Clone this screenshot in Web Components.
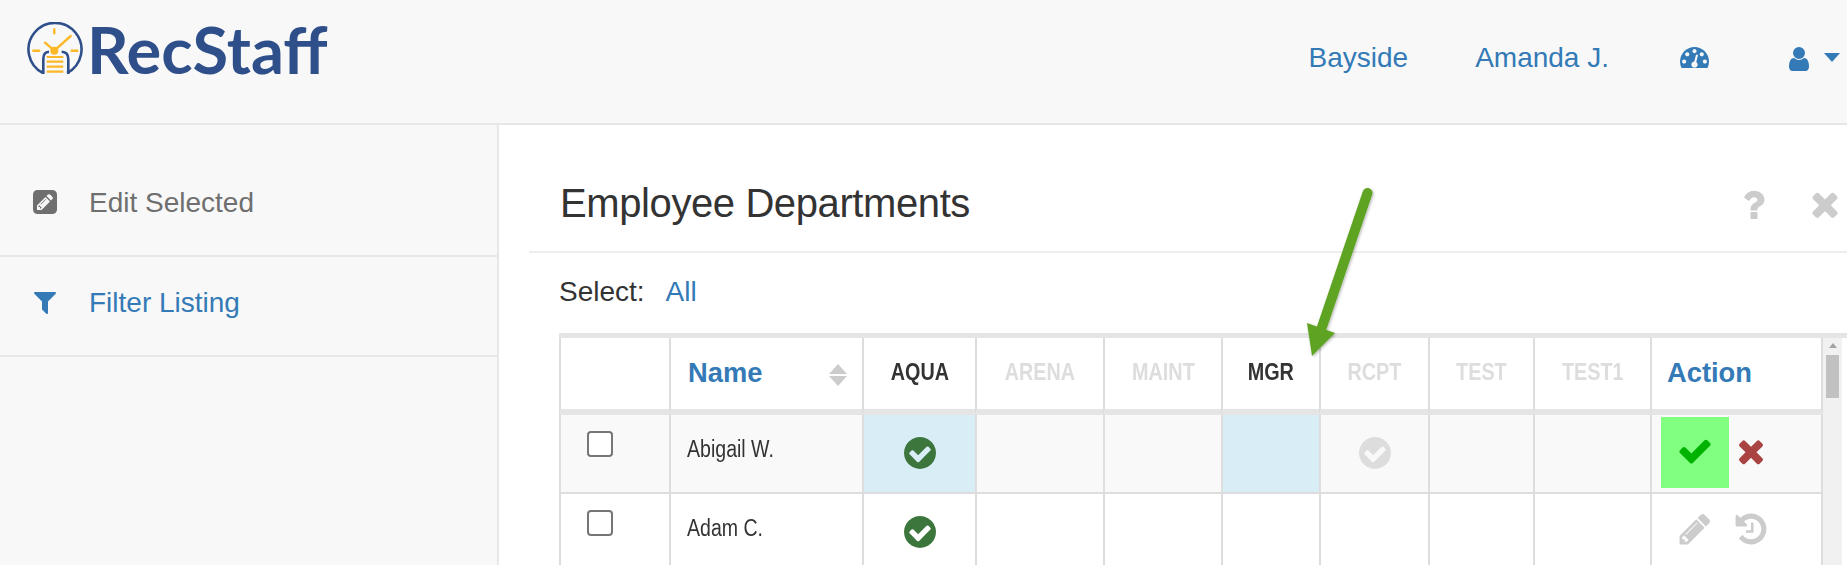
<!DOCTYPE html>
<html>
<head>
<meta charset="utf-8">
<title>RecStaff</title>
<style>
  html, body { margin: 0; height: 100%; overflow: hidden; background: #f8f8f8; }
  body { font-family: "Liberation Sans", Arial, sans-serif; color: #333; }
</style>
</head>
<body>
<rc-app></rc-app>
<script>
// font-awesome 4 style glyphs, traced into plain paths
const ICONS = {
  check: ['0 0 1792 1792', 'M1671 566q0 40-28 68l-724 724-136 136q-28 28-68 28t-68-28l-136-136-362-362q-28-28-28-68t28-68l136-136q28-28 68-28t68 28l294 295 656-657q28-28 68-28t68 28l136 136q28 28 28 68z'],
  times: ['0 0 1792 1792', 'M1490 1322q0 40-28 68l-136 136q-28 28-68 28t-68-28l-294-294-294 294q-28 28-68 28t-68-28l-136-136q-28-28-28-68t28-68l294-294-294-294q-28-28-28-68t28-68l136-136q28-28 68-28t68 28l294 294 294-294q28-28 68-28t68 28l136 136q28 28 28 68t-28 68l-294 294 294 294q28 28 28 68z'],
  circle: ['128 128 1536 1536', 'M1412 734q0-28-18-46l-91-90q-19-19-45-19t-45 19l-408 407-226-226q-19-19-45-19t-45 19l-91 90q-18 18-18 46 0 27 18 45l362 362q19 19 45 19 27 0 46-19l543-543q18-18 18-45zm252 162q0 209-103 385.5t-279.5 279.5-385.5 103-385.5-103-279.5-279.5-103-385.5 103-385.5 279.5-279.5 385.5-103 385.5 103 279.5 279.5 103 385.5z'],
  pencil: ['0 0 1792 1792', 'M491 1536l91-91-235-235-91 91v107h128v128h107zm523-928q0-22-22-22-10 0-17 7l-542 542q-7 7-7 17 0 22 22 22 10 0 17-7l542-542q7-7 7-17zm-54-192l416 416-832 832h-416v-416zm683 96q0 53-37 90l-166 166-416-416 166-165q36-38 90-38 53 0 91 38l235 234q37 39 37 91z'],
  filter: ['0 0 1792 1792', 'M1595 295q17 41-14 70l-493 493v742q0 42-39 59-13 5-25 5-27 0-45-19l-256-256q-19-19-19-45v-486l-493-493q-31-29-14-70 17-39 59-39h1280q42 0 59 39z'],
  user: ['0 0 1792 1792', 'M1536 1399q0 109-62.5 187t-150.5 78h-854q-88 0-150.5-78t-62.5-187q0-85 8.5-160.5t31.5-152 58.5-131 94-89 134.5-34.5q131 128 313 128t313-128q76 0 134.5 34.5t94 89 58.5 131 31.5 152 8.5 160.5zm-256-887q0 159-112.5 271.5t-271.5 112.5-271.5-112.5-112.5-271.5 112.5-271.5 271.5-112.5 271.5 112.5 112.5 271.5z'],
  history: ['0 0 1792 1792', 'M1664 896q0 156-61 298t-164 245-245 164-298 61q-172 0-327-72.5t-264-204.5q-7-10-6.5-22.5t8.5-20.5l137-138q10-9 25-9 16 2 23 12 73 95 179 147t225 52q104 0 198.5-40.5t163.5-109.5 109.5-163.5 40.5-198.5-40.5-198.5-109.5-163.5-163.5-109.5-198.5-40.5q-98 0-188 35.5t-160 101.5l137 138q31 30 14 69-17 40-59 40h-448q-26 0-45-19t-19-45v-448q0-42 40-59 39-17 69 14l130 129q107-101 244.5-156.5t284.5-55.5q156 0 298 61t245 164 164 245 61 298zm-640-288v448q0 14-9 23t-23 9h-320q-14 0-23-9t-9-23v-64q0-14 9-23t23-9h224v-352q0-14 9-23t23-9h64q14 0 23 9t9 23z'],
  question: ['0 128 1088 1536', 'M704 1256v240q0 16-12 28t-28 12h-240q-16 0-28-12t-12-28v-240q0-16 12-28t28-12h240q16 0 28 12t12 28zm316-600q0 54-15.5 101t-35 76.5-55 59.5-57.5 43.5-61 35.5q-41 23-68.5 65t-27.5 67q0 17-12 32.5t-28 15.5h-240q-15 0-25.5-18.5t-10.5-37.5v-45q0-83 65-156.5t143-108.5q59-27 84-56t25-76q0-42-46.5-74t-107.5-32q-65 0-108 29-35 25-107 115-13 16-31 16-12 0-25-8l-164-125q-13-10-15.5-25t5.5-28q160-266 464-266 80 0 161 31t146 83 106 127.5 41 158.5z'],
  editbox: ['128 128 1536 1536', 'M532 1108l152 152-52 52h-56v-96h-96v-56zm414-390q14 13-3 30l-291 291q-17 17-30 3-14-13 3-30l291-291q17-17 30-3zm-274 690l544-544-288-288-544 544v288h288zm608-608l92-92q28-28 28-68t-28-68l-152-152q-28-28-68-28t-68 28l-92 92zm384-384v960q0 119-84.5 203.5t-203.5 84.5h-960q-119 0-203.5-84.5t-84.5-203.5v-960q0-119 84.5-203.5t203.5-84.5h960q119 0 203.5 84.5t84.5 203.5z'],
  dashboard: ['0 256 1792 1280', 'M384 1152q0-53-37.5-90.5t-90.5-37.5-90.5 37.5-37.5 90.5 37.5 90.5 90.5 37.5 90.5-37.5 37.5-90.5zm192-448q0-53-37.5-90.5t-90.5-37.5-90.5 37.5-37.5 90.5 37.5 90.5 90.5 37.5 90.5-37.5 37.5-90.5zm428 481l101-382q6-26-7.5-48.5t-38.5-29.5-48 6.5-30 39.5l-101 382q-60 5-107 43.5t-63 98.5q-20 77 20 146t117 89 146-20 89-117q16-60-6-117t-72-91zm660-33q0-53-37.5-90.5t-90.5-37.5-90.5 37.5-37.5 90.5 37.5 90.5 90.5 37.5 90.5-37.5 37.5-90.5zm-640-640q0-53-37.5-90.5t-90.5-37.5-90.5 37.5-37.5 90.5 37.5 90.5 90.5 37.5 90.5-37.5 37.5-90.5zm448 192q0-53-37.5-90.5t-90.5-37.5-90.5 37.5-37.5 90.5 37.5 90.5 90.5 37.5 90.5-37.5 37.5-90.5zm320 448q0 261-141 483-19 29-54 29h-1402q-35 0-54-29-141-221-141-483 0-182 71-348t191-286 286-191 348-71 348 71 286 191 191 286 71 348z']
};

class RcIcon extends HTMLElement {
  connectedCallback() {
    const name = this.getAttribute('name');
    const size = this.getAttribute('size') || 24;
    const [box, d] = ICONS[name];
    const [, , w, h] = box.split(' ').map(Number);
    this.attachShadow({ mode: 'open' });
    this.shadowRoot.innerHTML = `
      <style>
        :host { display: inline-flex; line-height: 0; }
        svg { display: block; fill: currentColor; }
      </style>
      <svg width="${size}" height="${size * h / w}" viewBox="${box}"><path d="${d}"/></svg>
    `;
  }
}
customElements.define('rc-icon', RcIcon);

class RcHeader extends HTMLElement {
  constructor() {
    super();
    this.attachShadow({ mode: 'open' });
    this.shadowRoot.innerHTML = `
      <style>
        :host {
          display: flex;
          justify-content: space-between;
          height: 123px;
          border-bottom: 2px solid #e7e7e7;
          background: #f8f8f8;
        }
        .logo {
          display: flex;
          align-items: flex-start;
          padding: 22px 0 0 26px;
          color: #2f4f8a;
          font: 700 65px/54px Lato, sans-serif;
        }
        .logo svg { display: block; margin: 0 1px 0 0; flex: none; }
        nav {
          display: flex;
          align-items: flex-start;
          padding-top: 42px;
          color: #337ab7;
          font-size: 28px;
          line-height: 32px;
        }
        .who { margin-left: 67px; }
        .gauge { margin: 5px 0 0 71px; }
        .me { margin: 3px 0 0 76px; display: flex; }
        .caret {
          width: 0;
          height: 0;
          margin: 8px 7px 0 11px;
          border: 8px solid transparent;
          border-top: 9px solid #337ab7;
          border-bottom: 0;
        }
      </style>
      <div class="logo">
        <svg width="60" height="56" viewBox="0 0 60 56" fill="none">
          <path d="M17 51 A26.500 26.500 0 1 1 41 51" stroke="#2f4f8a" stroke-width="2.600"/>
          <path d="M17.300 52 V37 Q17.300 30 23 29.700 M42.300 52 V37 Q42.300 30 35.700 29.700" stroke="#2f4f8a" stroke-width="2.600"/>
          <path d="M28.300 7.300 V11.300 M7.300 28.700 H13.300 M45.700 28.700 H51.300 M28.300 28.700 L44.700 14 M28.300 28.700 L19 20.700" stroke="#fdb827" stroke-width="2.400" stroke-linecap="round"/>
          <circle cx="28.300" cy="28.700" r="4" fill="#fdb827"/>
          <path d="M20.700 35 H37.300 M20.700 39.700 H37.300 M20.700 44.700 H37.300 M20.700 49.700 H37.300" stroke="#fdb827" stroke-width="2.200"/>
        </svg>
        <span>RecStaff</span>
      </div>
      <nav>
        <span class="place">Bayside</span>
        <span class="who">Amanda J.</span>
        <rc-icon class="gauge" name="dashboard" size="29"></rc-icon>
        <span class="me"><rc-icon name="user" size="28"></rc-icon><i class="caret"></i></span>
      </nav>
    `;
  }
}
customElements.define('rc-header', RcHeader);

class RcSideLink extends HTMLElement {
  constructor() {
    super();
    this.attachShadow({ mode: 'open' });
    this.shadowRoot.innerHTML = `
      <style>
        :host {
          display: flex;
          align-items: center;
          height: 91px;
          padding-bottom: 7px;
          border-bottom: 2px solid #e7e7e7;
          font-size: 28px;
          color: var(--link-color, #337ab7);
        }
        .icon { width: 89px; padding-left: 33px; box-sizing: border-box; display: flex; }
      </style>
      <span class="icon"><slot name="icon"></slot></span>
      <slot></slot>
    `;
  }
}
customElements.define('rc-side-link', RcSideLink);

class RcSidebar extends HTMLElement {
  constructor() {
    super();
    this.attachShadow({ mode: 'open' });
    this.shadowRoot.innerHTML = `
      <style>
        :host { display: block; width: 497px; flex: none; padding-top: 32px; box-sizing: border-box; }
        .edit { margin-top: -2px; }
        .funnel { margin: -1px 0 0 -2px; }
      </style>
      <rc-side-link style="--link-color:#6f6f6f">
        <rc-icon class="edit" slot="icon" name="editbox" size="24"></rc-icon>Edit Selected
      </rc-side-link>
      <rc-side-link>
        <rc-icon class="funnel" slot="icon" name="filter" size="28"></rc-icon>Filter Listing
      </rc-side-link>
    `;
  }
}
customElements.define('rc-sidebar', RcSidebar);

class RcScrollbar extends HTMLElement {
  constructor() {
    super();
    this.attachShadow({ mode: 'open' });
    this.shadowRoot.innerHTML = `
      <style>
        :host { display: block; width: 19px; flex: none; background: #f1f1f1; }
        .up {
          width: 0; height: 0; margin: 5px auto 0;
          border: 4px solid transparent; border-bottom: 5px solid #a3a3a3; border-top: 0;
        }
        .thumb { width: 13px; height: 43px; margin: 7px 0 0 3px; background: #c1c1c1; }
      </style>
      <div class="up"></div>
      <div class="thumb"></div>
    `;
  }
}
customElements.define('rc-scrollbar', RcScrollbar);

const COLS = [110, 193, 113, 128, 118, 98, 109, 105, 117, 173];
const DEPTS = [
  ['AQUA', true], ['ARENA', false], ['MAINT', false], ['MGR', true],
  ['RCPT', false], ['TEST', false], ['TEST1', false]
];
const ROWS = [
  { name: 'Abigail W.', on: { AQUA: 'on', RCPT: 'off' }, hi: ['AQUA', 'MGR'], striped: true, editing: true },
  { name: 'Adam C.', on: { AQUA: 'on' }, hi: [], striped: false, editing: false }
];

class RcDeptTable extends HTMLElement {
  constructor() {
    super();
    this.attachShadow({ mode: 'open' });
    const head = DEPTS.map(([d, live]) =>
      `<div class="th dept ${live ? 'live' : ''}"><span>${d}</span></div>`).join('');
    const rows = ROWS.map(r => {
      const cells = DEPTS.map(([d]) => {
        const state = r.on[d];
        const mark = state ? `<rc-icon class="mark ${state}" name="circle" size="32"></rc-icon>` : '';
        return `<div class="td mid ${r.hi.includes(d) ? 'hi' : ''}">${mark}</div>`;
      }).join('');
      const action = r.editing
        ? `<span class="slot save"><rc-icon name="check" size="36"></rc-icon></span>
           <rc-icon class="cancel" name="times" size="36"></rc-icon>`
        : `<span class="slot"><rc-icon class="tool" name="pencil" size="36"></rc-icon></span>
           <rc-icon class="tool two" name="history" size="36"></rc-icon>`;
      return `<div class="row ${r.striped ? 'striped' : ''}">
        <div class="td box"><i class="tick"></i></div>
        <div class="td name"><span>${r.name}</span></div>
        ${cells}
        <div class="td action">${action}</div>
      </div>`;
    }).join('');
    this.shadowRoot.innerHTML = `
      <style>
        :host { display: flex; margin-left: 60px; border-top: 5px solid #e5e5e5; }
        .table { display: block; flex: none; }
        .row { display: grid; grid-template-columns: ${COLS.map(c => c + 'px').join(' ')}; }
        .th, .td { box-sizing: border-box; border-left: 2px solid #ddd; min-width: 0; }
        .th:last-child, .td:last-child { border-right: 2px solid #ddd; }
        .head .th { height: 77px; border-bottom: 6px solid #e5e5e5; }
        .th.title {
          display: flex; justify-content: space-between; align-items: flex-start;
          padding: 19px 15px 0 17px;
          color: #337ab7; font-size: 27.3px; font-weight: 700; line-height: 32px;
        }
        .th.action { padding-left: 15px; }
        .sort { display: flex; flex-direction: column; gap: 2px; margin-top: 7px; }
        .sort i { width: 0; height: 0; border: 9px solid transparent; border-top: 0; border-bottom: 10px solid #ccc; }
        .sort i + i { border-bottom: 0; border-top: 10px solid #ccc; }
        .dept {
          text-align: center; padding-top: 23px;
          font-size: 23px; line-height: 23px; font-weight: 700; color: #ddd;
        }
        .dept span { display: inline-block; transform: scaleX(.86); }
        .dept.live { color: #333; }
        .td { height: 79px; border-bottom: 2px solid #ddd; }
        .striped .td { background: #f9f9f9; }
        .striped .td.hi { background: #d9edf7; }
        .box { padding: 16px 0 0 26px; }
        .tick { display: block; width: 26px; height: 26px; box-sizing: border-box; border: 2px solid #767676; border-radius: 4px; background: #fff; }
        .name { padding: 21px 0 0 16px; font-size: 23px; line-height: 26px; color: #333; }
        .name span { display: inline-block; transform: scaleX(.85); transform-origin: left; white-space: nowrap; }
        .mid { display: flex; justify-content: center; padding-top: 22px; }
        .mark.on { color: #3c763d; }
        .mark.off { color: #ddd; }
        .action { display: flex; align-items: flex-start; padding: 2px 0 0 9px; }
        .slot { display: flex; justify-content: center; width: 68px; height: 71px; box-sizing: border-box; }
        .save { align-items: center; padding-bottom: 3px; background: #80ff80; color: #00b300; }
        .cancel { color: #a94442; margin: 16px 0 0 4px; }
        .tool { color: #ccc; margin-top: 15px; }
        .tool.two { margin-left: 4px; }
      </style>
      <div class="table">
        <div class="row head">
          <div class="th"></div>
          <div class="th title">Name<span class="sort"><i></i><i></i></span></div>
          ${head}
          <div class="th title action">Action</div>
        </div>
        ${rows}
      </div>
      <rc-scrollbar></rc-scrollbar>
    `;
  }
}
customElements.define('rc-dept-table', RcDeptTable);

class RcPanel extends HTMLElement {
  constructor() {
    super();
    this.attachShadow({ mode: 'open' });
    this.shadowRoot.innerHTML = `
      <style>
        :host {
          display: block; position: relative; flex: 1; min-width: 0;
          background: #fff; border-left: 2px solid #e7e7e7;
        }
        header {
          display: flex; justify-content: space-between;
          margin-left: 30px; padding: 56px 3px 0 31px; height: 70px;
          border-bottom: 2px solid #eee;
        }
        h1 { margin: 0; font-size: 40px; line-height: 44px; font-weight: 400; letter-spacing: -.4px; color: #333; }
        .tools { display: flex; color: #ccc; }
        .tools .close { margin: 4px 0 0 40px; }
        .tools .help { margin: 7px 0 0 0; }
        .select { margin: 17px 0 19px 60px; height: 44px; font-size: 28px; line-height: 44px; color: #333; }
        .select a { color: #337ab7; margin-left: 21px; }
        .arrow { position: absolute; left: 800px; top: 55px; overflow: visible; }
      </style>
      <header>
        <h1>Employee Departments</h1>
        <div class="tools">
          <rc-icon class="help" name="question" size="24"></rc-icon>
          <rc-icon class="close" name="times" size="38"></rc-icon>
        </div>
      </header>
      <div class="select">Select:<a>All</a></div>
      <rc-dept-table></rc-dept-table>
      <svg class="arrow" width="80" height="190" viewBox="0 0 80 190">
        <defs><filter id="s" x="-30%" y="-10%" width="160%" height="120%"><feDropShadow dx="1" dy="1" stdDeviation="1.500" flood-color="#000" flood-opacity=".3"/></filter></defs>
        <g filter="url(#s)">
          <path d="M68.500 13 L23 147" stroke="#5fa324" stroke-width="10" stroke-linecap="round" fill="none"/>
          <path d="M8 143 L36 153 L13 176 Z" fill="#5fa324"/>
        </g>
      </svg>
    `;
  }
}
customElements.define('rc-panel', RcPanel);

class RcApp extends HTMLElement {
  constructor() {
    super();
    this.attachShadow({ mode: 'open' });
    this.shadowRoot.innerHTML = `
      <style>
        :host { display: flex; flex-direction: column; height: 100vh; overflow: hidden; }
        main { display: flex; flex: 1; min-height: 0; }
      </style>
      <rc-header></rc-header>
      <main>
        <rc-sidebar></rc-sidebar>
        <rc-panel></rc-panel>
      </main>
    `;
  }
}
customElements.define('rc-app', RcApp);
</script>
</body>
</html>
